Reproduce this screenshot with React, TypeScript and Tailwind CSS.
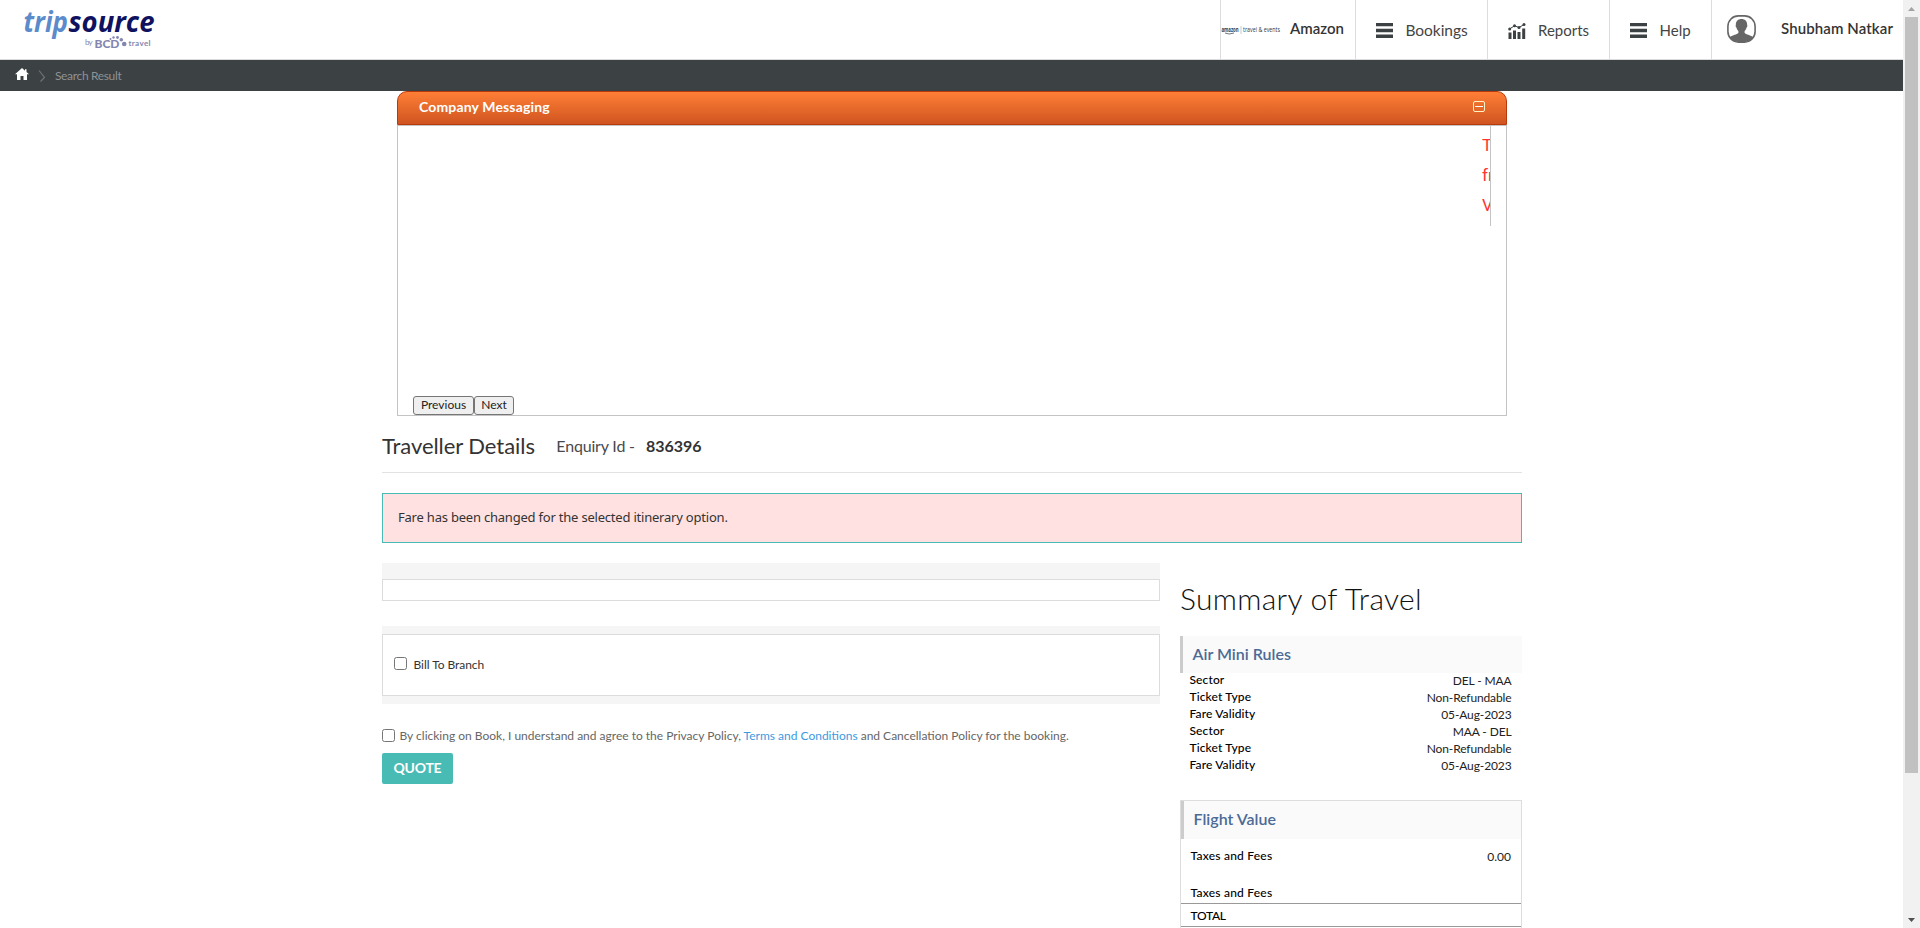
import React from "react";

const bar = "flex items-center whitespace-nowrap";

function Burger() {
  return (
    <svg className="h-[15px] w-[17px] shrink-0" viewBox="0 0 17 15">
      <path fill="#3c4144" d="M0 0h17v3.3H0zM0 5.7h17v3.6H0zM0 11.4h17V15H0z" />
    </svg>
  );
}

function ChartIcon() {
  return (
    <svg className="h-[17px] w-[18px] shrink-0" viewBox="0 0 18 17">
      <path fill="#3c4144" d="M0.5 9.500h3V16h-3zM5 7.500h3V16H5zM9.500 9h3v7h-3zM14.200 5.500h3V16h-3z" />
      <path d="M1.500 6L6.500 2.800L11 4.500L16 1.500" fill="none" stroke="#3c4144" strokeWidth="1" />
      <g fill="#3c4144">
        <circle cx="1.700" cy="6" r="1.500" />
        <circle cx="6.500" cy="2.800" r="1.500" />
        <circle cx="11" cy="4.500" r="1.500" />
        <circle cx="16" cy="1.600" r="1.500" />
      </g>
    </svg>
  );
}

function Avatar() {
  return (
    <svg className="h-[28px] w-[29px] shrink-0" viewBox="0 0 29 28">
      <defs>
        <clipPath id="avatar-clip">
          <rect x="1" y="1" width="27" height="26" rx="10.500" />
        </clipPath>
      </defs>
      <g clipPath="url(#avatar-clip)" fill="#666">
        <path d="M14.500 4c3.700 0 6 2.500 5.600 6.200c.5.300.4 1.900-.5 2.300c-.4 1.500-1 2.600-2 3.400v2c1.600 1.800 5.400 1.600 8.400 4.100V28H3v-6c3-2.500 6.800-2.300 8.400-4.100v-2c-1-.8-1.600-1.900-2-3.400c-.9-.4-1-2-.5-2.300C8.500 6.500 10.800 4 14.500 4z" />
      </g>
      <rect x="0.900" y="0.900" width="27.200" height="26.200" rx="10.500" fill="none" stroke="#666" strokeWidth="1.600" />
    </svg>
  );
}

function Logo() {
  return (
    <svg className="h-[59px] w-[170px] shrink-0" viewBox="0 0 170 59">
      <text x="23.500" y="31.500" fontFamily="'Open Sans', sans-serif" fontStyle="italic" fontWeight="700" fontSize="29" fill="#5b8bcb" textLength="44.500" lengthAdjust="spacingAndGlyphs">trip</text>
      <text x="68.500" y="31.500" fontFamily="'Open Sans', sans-serif" fontStyle="italic" fontWeight="700" fontSize="29" fill="#10125f" textLength="86" lengthAdjust="spacingAndGlyphs">source</text>
      <g fill="#8486b0" fontFamily="Lato, sans-serif">
        <text x="85" y="45" fontSize="8" textLength="7.500">by</text>
        <text x="94.500" y="48.200" fontSize="11.500" fontWeight="900" textLength="25" lengthAdjust="spacingAndGlyphs">BCD</text>
        <text x="128.500" y="46.200" fontSize="8" fontWeight="700" textLength="22">travel</text>
        <circle cx="110.500" cy="38.900" r="1" />
        <circle cx="113.500" cy="37.500" r="1.200" />
        <circle cx="117.500" cy="37.500" r="1.400" />
        <circle cx="121.300" cy="39.700" r="1.800" />
        <circle cx="124.200" cy="44" r="2.300" />
      </g>
    </svg>
  );
}

function Header() {
  return (
    <header className="flex h-[60px] border-b border-[#d9dbdc] text-[#333]">
      <Logo />
      <div className={`${bar} ml-[1050px] h-[59px] w-[135px] border-l border-[#ddd]`}>
        <svg className="h-[12px] w-[60px] shrink-0" viewBox="0 0 60 12">
          <g fontFamily="'Open Sans', sans-serif" fill="#2c3a4b">
            <text x="0.500" y="7.500" fontSize="6.500" fontWeight="700" textLength="17" lengthAdjust="spacingAndGlyphs">amazon</text>
            <text x="22" y="8" fontSize="6.500" textLength="37" lengthAdjust="spacingAndGlyphs">travel &amp; events</text>
          </g>
          <path d="M4 9q4 2 9 0" fill="none" stroke="#2c3a4b" strokeWidth="0.700" />
          <path d="M20 2v8" stroke="#bbb" strokeWidth="0.800" />
        </svg>
        <span className="ml-[9px] pb-[3px] text-[15px] font-semibold leading-[56px]">Amazon</span>
      </div>
      <div className={`${bar} h-[59px] w-[132px] border-l border-[#ddd] pl-[20px]`}>
        <span className="pt-[2px]"><Burger /></span>
        <span className="ml-[12.5px] text-[15.5px] leading-[58px] tracking-[-0.05px] text-[#444]">Bookings</span>
      </div>
      <div className={`${bar} h-[59px] w-[122px] border-l border-[#ddd] pl-[20px]`}>
        <span className="pt-[3px]"><ChartIcon /></span>
        <span className="ml-[12px] text-[15px] leading-[58px] text-[#444]">Reports</span>
      </div>
      <div className={`${bar} h-[59px] w-[102px] border-l border-[#ddd] pl-[20px]`}>
        <span className="pt-[2px]"><Burger /></span>
        <span className="ml-[12.5px] text-[15px] leading-[58px] text-[#444]">Help</span>
      </div>
      <div className={`${bar} h-[59px] flex-1 border-l border-[#ddd] pl-[15px]`}>
        <span className="pb-px"><Avatar /></span>
        <span className="ml-[25px] pb-[3px] text-[15px] font-semibold leading-[56px] tracking-[0.1px]">Shubham Natkar</span>
      </div>
    </header>
  );
}

function Breadcrumb() {
  return (
    <nav className={`${bar} h-[31px] bg-[#3c4144] pl-[15px]`}>
      <svg className="mb-[3px] h-[12px] w-[14px]" viewBox="0 0 14 12">
        <path fill="#fff" d="M7 0L0 6.300h2V12h3.500V8h3v4H12V6.300h2L11.500 4V1.200H10v1.500z" />
      </svg>
      <svg className="ml-[9px] mt-px h-[12px] w-[8px]" viewBox="0 0 8 12">
        <path d="M1 0.500L6.500 7.500L2.500 11.500" fill="none" stroke="#6f7375" strokeWidth="1.200" />
      </svg>
      <span className="ml-[9px] pt-px text-[12px] leading-[30px] tracking-[-0.35px] text-[#8e9294]">Search Result</span>
    </nav>
  );
}

function Messaging() {
  return (
    <section className="mx-[15px]">
      <div className="flex h-[34px] items-center justify-between rounded-t-[10px] border border-[#b8390b] bg-gradient-to-b from-[#ff7f36] to-[#cf5420] px-[21px]">
        <span className="pb-[2px] text-[14px] font-bold leading-[30px] tracking-[0.15px] text-white">Company Messaging</span>
        <svg className="mb-[4px] h-[11px] w-[12px]" viewBox="0 0 12 11">
          <rect x="0.500" y="0.500" width="11" height="10" rx="1.500" fill="none" stroke="#fff3c4" />
          <path d="M2 5.500h8" stroke="#fff" />
        </svg>
      </div>
      <div className="flex h-[291px] flex-col justify-between border border-[#c4c4c4] px-[15px]">
        <div className="flex h-[100px] justify-end border-r border-[#c4c4c4] pt-[4px]">
          <div className="w-[8px] overflow-hidden whitespace-nowrap font-[Roboto,sans-serif] text-[17px] leading-[30px] text-[#ff3434]">
            <p>T</p>
            <p>fr</p>
            <p>V</p>
          </div>
        </div>
        <div className="flex text-[12px] text-[#222]">
          <button className="h-[19px] w-[61px] rounded-[3px] border border-[#767676] bg-[#efefef] pb-px leading-[16px]">Previous</button>
          <button className="h-[19px] w-[40px] rounded-[3px] border border-[#767676] bg-[#efefef] pb-px leading-[16px]">Next</button>
        </div>
      </div>
    </section>
  );
}

function Check() {
  return <input type="checkbox" className="h-[13px] w-[13px] shrink-0 appearance-none rounded-[2.5px] border border-[#767676] bg-white" />;
}

function Booking() {
  return (
    <div className="w-[778px]">
      <div className="h-[16px] bg-[#f5f5f5]" />
      <div className="h-[22px] border border-[#dcdcdc]" />
      <div className="mt-[25px] bg-[#f5f5f5] py-[8px]">
        <label className={`${bar} h-[62px] border border-[#dcdcdc] bg-white pl-[11px] text-[12px] text-[#333]`}>
          <span className="mb-[3px] flex"><Check /></span>
          <span className="ml-[6.5px] leading-[16px] tracking-[-0.05px]">Bill To Branch</span>
        </label>
      </div>
      <div className={`${bar} mt-[25px] h-[13px] text-[12px] text-[#666]`}>
        <Check />
        <span className="ml-[4.5px] leading-[16px]">
          By clicking on Book, I understand and agree to the Privacy Policy, <a className="text-[#3d9ade]">Terms and Conditions</a> and Cancellation Policy for the booking.
        </span>
      </div>
      <button className="mt-[11px] h-[31px] w-[71px] rounded-[2px] bg-[#48bbb4] pb-px text-[14px] font-bold leading-[30px] tracking-[-0.25px] text-white">QUOTE</button>
    </div>
  );
}

const rules: [string, string][] = [
  ["Sector", "DEL - MAA"],
  ["Ticket Type", "Non-Refundable"],
  ["Fare Validity", "05-Aug-2023"],
  ["Sector", "MAA - DEL"],
  ["Ticket Type", "Non-Refundable"],
  ["Fare Validity", "05-Aug-2023"],
];

function Summary() {
  return (
    <aside className="w-[342px] text-[12px] text-black">
      <h2 className="mt-[16px] h-[57px] whitespace-nowrap text-[30px] font-light leading-[38px] tracking-[0.3px] text-[#111]">Summary of Travel</h2>
      <h3 className="h-[37px] border-l-[3px] border-[#ccc] bg-[#fafafa] pl-[9.5px] text-[16px] font-semibold leading-[35px] text-[#4d6a96]">Air Mini Rules</h3>
      <div className="-mt-[2px]">
        {rules.map(([label, value], i) => (
          <div key={i} className="flex h-[17px] justify-between pl-[9.5px] pr-[10.5px] leading-[17px]">
            <span className="font-medium tracking-[0.12px]">{label}</span>
            <span className="pt-px tracking-[-0.12px] text-[#222]">{value}</span>
          </div>
        ))}
      </div>
      <div className="mt-[27px] border border-[#ddd]">
        <h3 className="h-[38px] border-l-[3px] border-[#ccc] bg-[#fafafa] pl-[9.5px] text-[16px] font-semibold leading-[35px] text-[#4d6a96]">Flight Value</h3>
        <div className="flex h-[37px] justify-between pl-[9.5px] pr-[10px] pt-[8px] leading-[17px]">
          <span className="font-medium tracking-[0.22px]">Taxes and Fees</span>
          <span className="pt-px text-[#222]">0.00</span>
        </div>
        <div className="h-[28px] border-b border-[#999] pl-[9.5px] pt-[8px] font-medium leading-[17px] tracking-[0.22px]">Taxes and Fees</div>
        <div className="h-[23px] border-b border-[#999] pl-[9.5px] pt-[3px] font-medium leading-[17px] tracking-[-0.3px]">TOTAL</div>
        <div className="h-[20px]" />
      </div>
    </aside>
  );
}

export default function App() {
  return (
    <div className="flex h-[928px] overflow-hidden bg-white font-['Lato',sans-serif]">
      <div className="h-[928px] w-[1903px] overflow-hidden">
        <Header />
        <Breadcrumb />
        <main className="ml-[382px] w-[1140px]">
          <Messaging />
          <div className={`${bar} h-[57px] border-b border-[#e2e2e2] pt-[4px] text-[#333]`}>
            <h1 className="text-[22px] leading-[26px] tracking-[-0.06px]">Traveller Details</h1>
            <span className="ml-[21.5px] text-[16px] tracking-[-0.18px] text-[#4a4a4a]">Enquiry Id -</span>
            <span className="ml-[11px] text-[16px] font-bold">836396</span>
          </div>
          <div className="mt-[20px] h-[50px] border border-[#48bbb4] bg-[#ffe1e1] pl-[15px] font-['Noto_Sans',sans-serif] text-[13px] leading-[47px] tracking-[-0.21px] text-[#333]">
            Fare has been changed for the selected itinerary option.
          </div>
          <div className="mt-[20px] flex justify-between">
            <Booking />
            <Summary />
          </div>
        </main>
      </div>
      <div className="flex w-[17px] flex-col items-center justify-between bg-[#f1f1f1]">
        <div className="flex h-[17px] items-center"><svg className="h-[4px] w-[7px]" viewBox="0 0 7 4"><path fill="#a3a3a3" d="M3.500 0L7 4H0z" /></svg></div>
        <div className="h-[756px] w-[13px] bg-[#c1c1c1]" />
        <div className="flex-1" />
        <div className="flex h-[17px] items-center"><svg className="h-[4px] w-[7px]" viewBox="0 0 7 4"><path fill="#505050" d="M3.500 4L7 0H0z" /></svg></div>
      </div>
    </div>
  );
}
